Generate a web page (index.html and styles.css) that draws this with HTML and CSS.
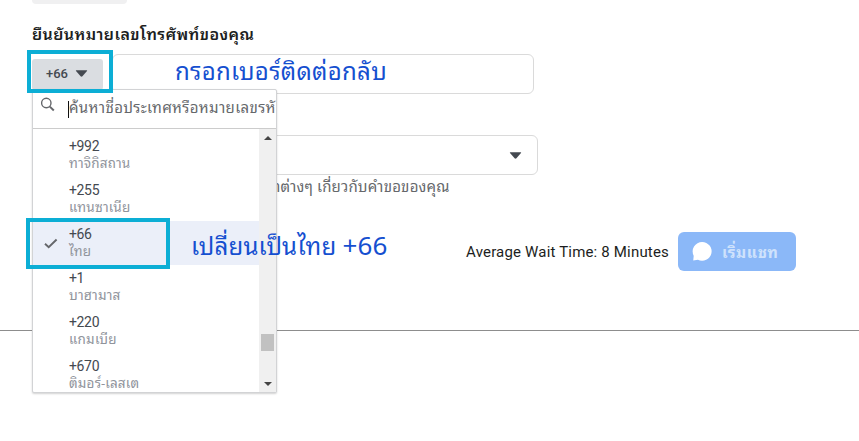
FILE: index.html
```html
<!DOCTYPE html>
<html lang="th">
<head>
<meta charset="utf-8">
<title>ยืนยันหมายเลขโทรศัพท์</title>
<link rel="stylesheet" href="styles.css">
</head>
<body>
<main class="form">
  <div class="chip"></div>
  <label class="label">ยืนยันหมายเลขโทรศัพท์ของคุณ</label>
  <div class="phone-row">
    <button class="code"><span>+66</span><svg width="13" height="9" viewBox="0 0 14 9"><path d="M1.500 1h11q1 0 .4.900L8 7.500q-1 1-2 0L1.100 1.900Q.5 1 1.500 1z" fill="#444950"/></svg></button>
    <div class="input"></div>
    <div class="menu">
      <div class="search">
        <svg width="16" height="16" viewBox="0 0 16 16" fill="none" stroke="#65676b"><circle cx="6.300" cy="6" r="4.700" stroke-width="1.400"/><path d="M9.800 9.600l4 3.800" stroke-width="2"/></svg>
        <div class="query">ค้นหาชื่อประเทศหรือหมายเลขรหั</div>
      </div>
      <div class="list">
        <div class="options">
          <div class="option"><b>+992</b><small>ทาจิกิสถาน</small></div>
          <div class="option"><b>+255</b><small>แทนซาเนีย</small></div>
          <div class="option selected"><svg class="check" width="14" height="11" viewBox="0 0 14 11"><path d="M1 5.800l3.700 3.500L12.600 1.500" fill="none" stroke="#65676b" stroke-width="1.900"/></svg><b>+66</b><small>ไทย</small></div>
          <div class="option"><b>+1</b><small>บาฮามาส</small></div>
          <div class="option"><b>+220</b><small>แกมเบีย</small></div>
          <div class="option"><b>+670</b><small>ติมอร์-เลสเต</small></div>
        </div>
        <div class="scrollbar"><i class="up"></i><i class="thumb"></i><i class="down"></i></div>
      </div>
    </div>
  </div>
  <div class="select"><svg width="13" height="9" viewBox="0 0 14 9"><path d="M1.500 1h11q1 0 .4.900L8 7.500q-1 1-2 0L1.100 1.900Q.5 1 1.500 1z" fill="#444950"/></svg></div>
  <div class="help">าต่างๆ เกี่ยวกับคำขอของคุณ</div>
  <div class="actions">
    <span class="wait">Average Wait Time: 8 Minutes</span>
    <button class="chat"><svg width="20" height="21" viewBox="0 0 21 21"><path d="M10.700.5a10 9.800 0 1 1-4.500 18.600L1.300 20l.5-5A9.900 9.900 0 0 1 10.700.5z" fill="#fff"/></svg><span>เริ่มแชท</span></button>
  </div>
</main>
<hr>
<div class="mark mark-code"></div>
<div class="mark mark-option"></div>
<div class="note note-phone">กรอกเบอร์ติดต่อกลับ</div>
<div class="note note-country"><span>เปลี่ยนเป็นไทย</span><span class="dial">+66</span></div>
</body>
</html>
```
FILE: styles.css
```css
* { box-sizing: border-box; }
body { margin: 0; position: relative; height: 441px; overflow: hidden; background: #fff; color: #1c1e21; font-family: Roboto, "Noto Sans Thai Looped", "Noto Looped Thai", Loma, Waree, "Noto Sans Thai", "Noto Sans", sans-serif; }
svg { display: block; flex: none; }
button { border: 0; font-family: inherit; }
.form { height: 330px; padding-left: 32px; display: flex; flex-direction: column; white-space: nowrap; }
.chip { width: 95px; height: 4px; background: #f0f0f1; border-radius: 0 0 5px 5px; }
.label { margin-top: 20px; height: 30px; line-height: 22px; font-size: 16px; font-weight: 600; letter-spacing: .4px; }
.phone-row { position: relative; display: flex; width: 502px; height: 40px; gap: 9px; }
.code { width: 71px; height: 31px; margin-top: 5px; padding: 0 0 2px 14px; display: flex; align-items: center; gap: 7px; background: #dadde1; border-radius: 3px; color: #444950; font-size: 13px; font-weight: 500; }
.input { flex: 1; border: 1px solid #dadada; border-radius: 6px; }
.menu { position: absolute; left: 0; top: 35px; width: 245px; height: 304px; background: #fff; border: 1px solid #d2d3d5; border-radius: 0 2px 2px 2px; box-shadow: 0 1px 2px rgba(0,0,0,.18); display: flex; flex-direction: column; overflow: hidden; }
.search { height: 39px; padding: 7px 0 0 7px; display: flex; border-bottom: 1px solid #ccc; }
.query { margin: 4px 0 0 12px; height: 17px; line-height: 15px; border-left: 1px solid #111; font-size: 15px; letter-spacing: .34px; color: #65676b; }
.list { flex: 1; display: flex; min-height: 0; }
.options { flex: 1; padding-top: 4px; overflow: hidden; }
.option { position: relative; height: 44px; padding: 4px 0 0 36px; }
.option b { display: block; height: 18px; line-height: 18px; font-size: 14px; letter-spacing: -.35px; font-weight: 400; color: #444950; }
.option small { display: block; height: 18px; line-height: 17px; font-size: 13.5px; letter-spacing: .2px; color: #90949c; }
.selected { background: #ebeff9; }
.check { position: absolute; left: 11px; top: 17px; }
.scrollbar { width: 17px; background: #f0f0f0; display: flex; flex-direction: column; align-items: center; padding: 7px 0 6px; }
.up, .down { border: 4px solid transparent; border-top: 0; border-bottom: 4px solid #444; }
.down { border-bottom: 0; border-top: 4px solid #444; margin-top: auto; }
.thumb { width: 13px; height: 17px; margin-top: 194px; background: #c1c1c1; }
.select { width: 506px; height: 40px; margin-top: 41px; padding-right: 15px; display: flex; align-items: center; justify-content: flex-end; border: 1px solid #dadada; border-radius: 6px; }
.help { margin: 1px 0 0 242px; height: 22px; line-height: 22px; font-size: 15px; letter-spacing: .2px; color: #65676b; }
.actions { margin-top: 34px; width: 764px; height: 39px; display: flex; align-items: center; justify-content: flex-end; gap: 9px; }
.wait { font-size: 15px; letter-spacing: .18px; }
.chat { width: 118px; height: 39px; padding: 0 0 0 14px; display: flex; align-items: center; gap: 10px; border-radius: 6px; background: #8bb8f8; color: #cfe2fc; font-size: 15.5px; letter-spacing: .5px; font-weight: 700; }
.chat span { line-height: 20px; margin-top: 2px; }
hr { margin: 0; border: 0; height: 1px; background: #8d8d8d; }
.mark { position: absolute; border: 4px solid #0caed5; }
.mark-code { left: 27px; top: 50px; width: 86px; height: 43px; }
.mark-option { left: 26px; top: 218px; width: 144px; height: 51px; }
.note { position: absolute; color: #154fd0; font-family: "Noto Sans Thai Looped", "Noto Looped Thai", Loma, Waree, "Noto Sans", sans-serif; font-size: 24px; line-height: 36px; letter-spacing: .3px; white-space: nowrap; }
.note-phone { left: 175px; top: 51px; }
.note-country { left: 191px; top: 225px; display: flex; align-items: baseline; gap: 6px; letter-spacing: .2px; }
.dial { font-size: 26px; }
```
